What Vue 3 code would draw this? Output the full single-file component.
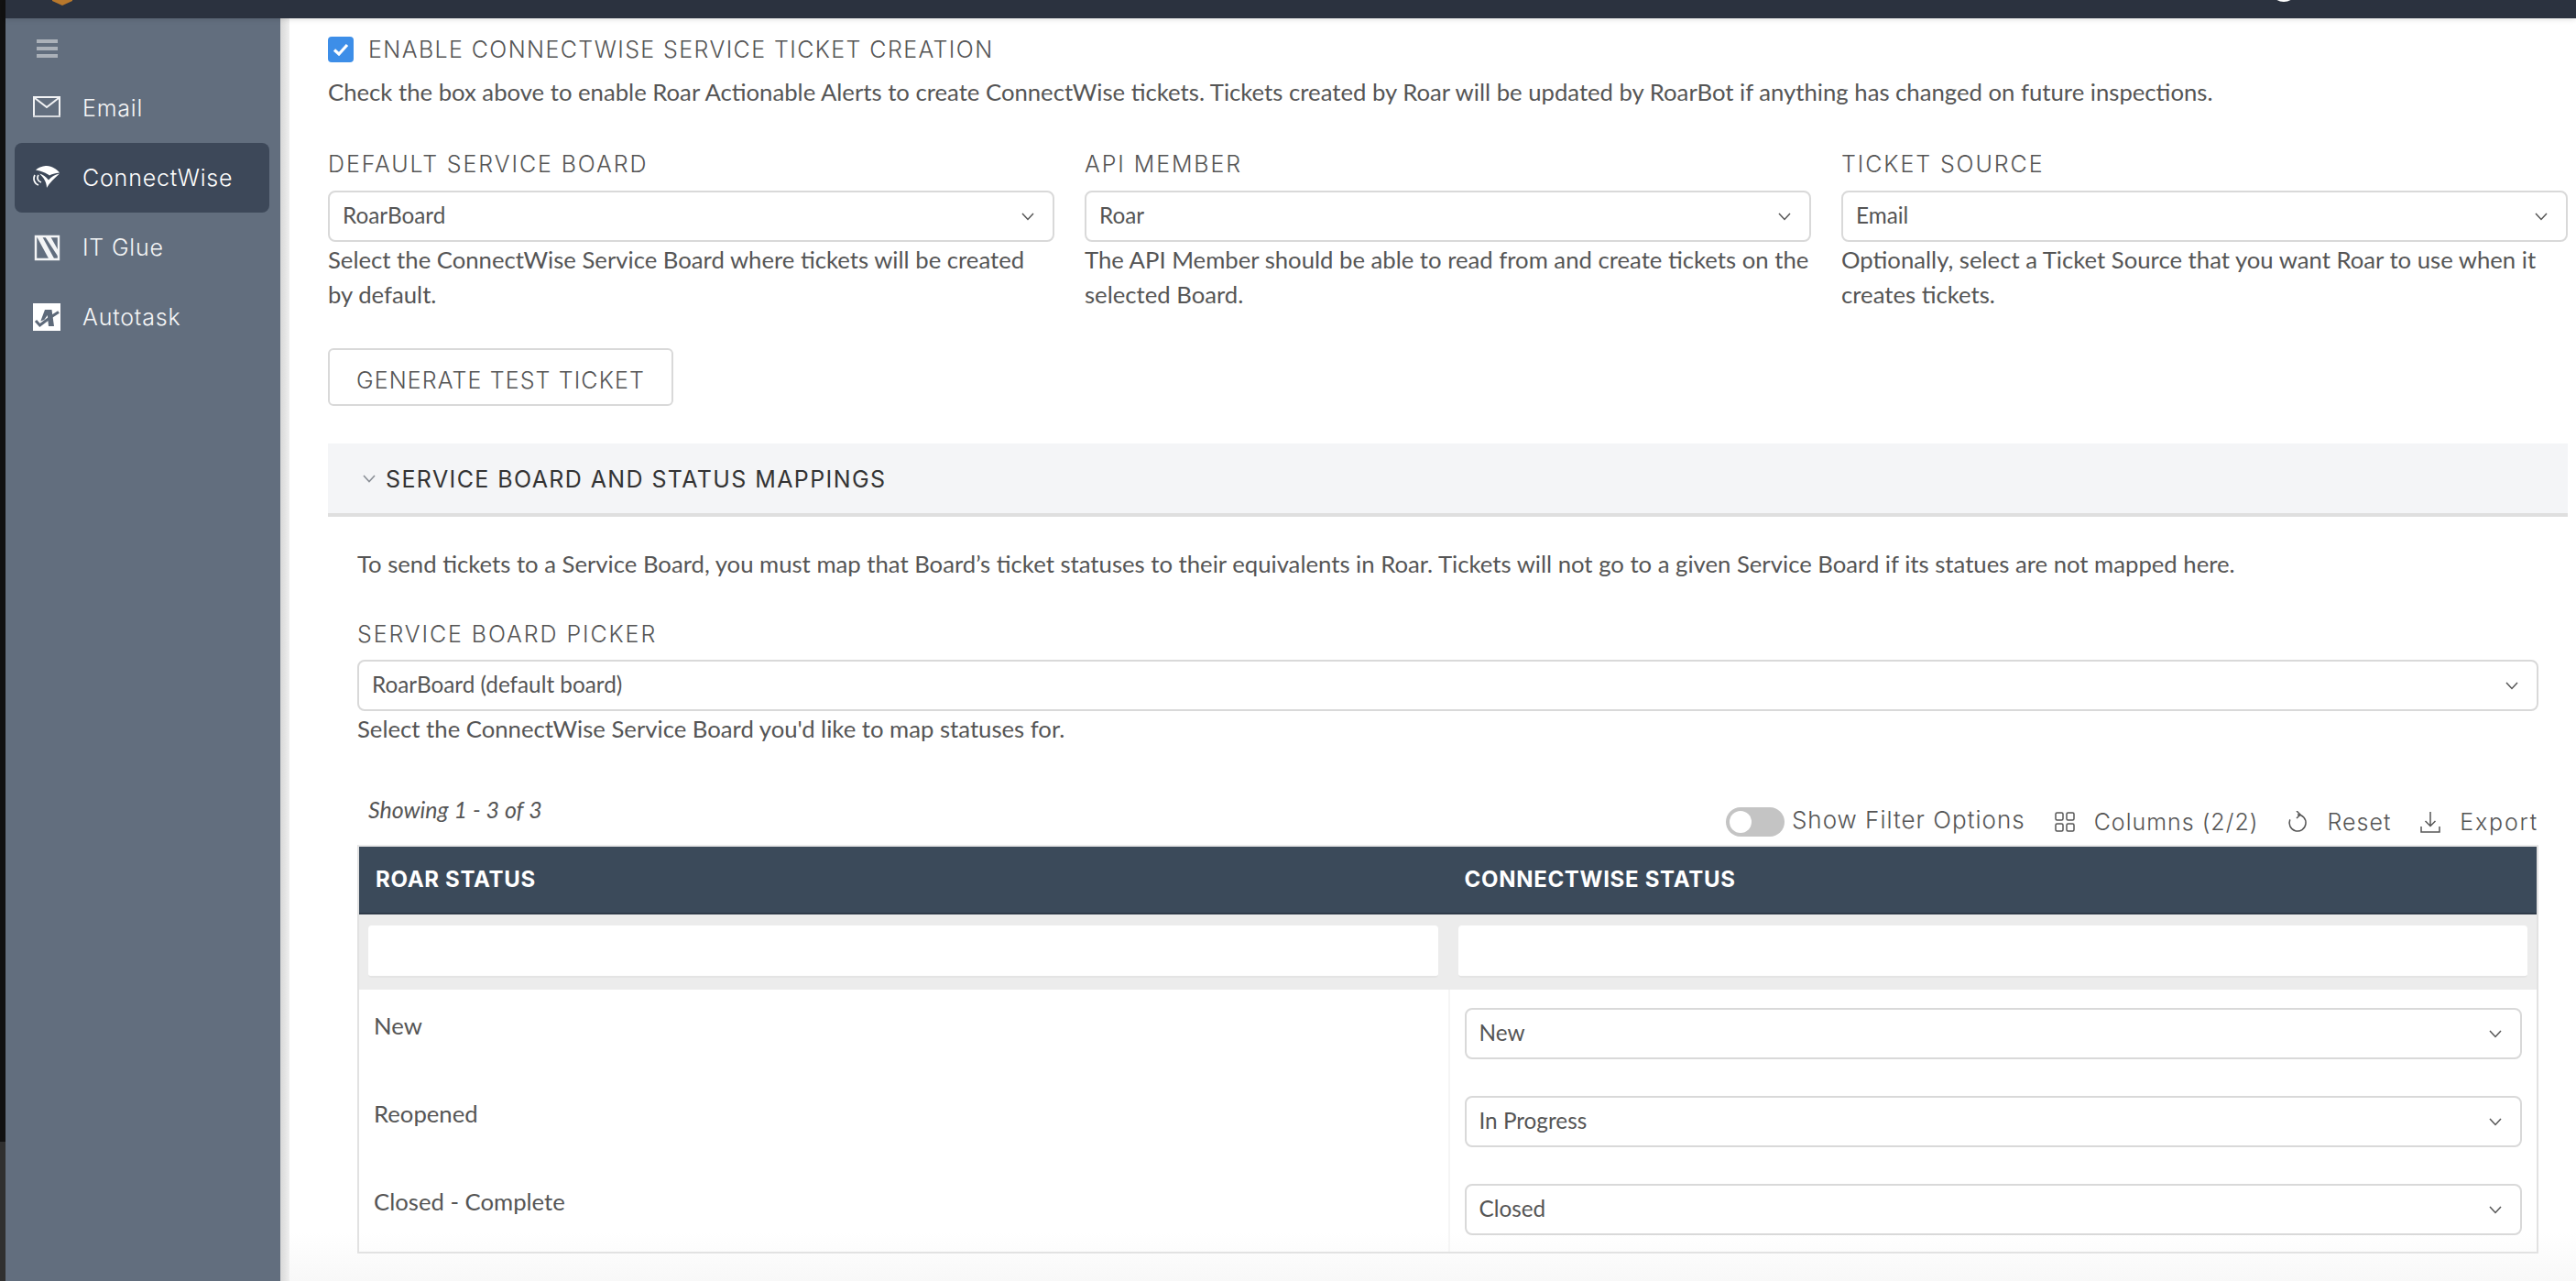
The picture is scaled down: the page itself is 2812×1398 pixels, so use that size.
<script setup>
const columns = [
  { label: 'DEFAULT SERVICE BOARD', value: 'RoarBoard', help: 'Select the ConnectWise Service Board where tickets will be created by default.' },
  { label: 'API MEMBER', value: 'Roar', help: 'The API Member should be able to read from and create tickets on the selected Board.' },
  { label: 'TICKET SOURCE', value: 'Email', help: 'Optionally, select a Ticket Source that you want Roar to use when it creates tickets.' }
]
const rows = [
  { roar: 'New', cw: 'New' },
  { roar: 'Reopened', cw: 'In Progress' },
  { roar: 'Closed - Complete', cw: 'Closed' }
]
</script>

<template>
  <div class="frame">
    <div class="strip"></div>
    <div class="shell">
      <header class="topbar">
        <svg class="logo" width="22" height="6" viewBox="0 0 22 6"><path d="M0 0h22v1l-11 5L0 1z" fill="#b8782c" /></svg>
        <div class="avatar"></div>
      </header>
      <div class="body">
        <aside class="sidebar">
          <div class="burger"><i></i><i></i><i></i></div>
          <nav class="nav">
            <a class="nav-item">
              <svg class="nav-icon" width="30" height="30" viewBox="0 0 30 30">
                <path d="M1 3h28v21H1z" fill="none" stroke="#f2f3f5" stroke-width="2" />
                <path d="M2 4l13 10L28 4" fill="none" stroke="#f2f3f5" stroke-width="2" />
                <path d="M0 23h30v2H0z" fill="#d5d8dc" />
              </svg>
              <span>Email</span>
            </a>
            <a class="nav-item active">
              <svg class="nav-icon" width="30" height="30" viewBox="6 8 30 30">
                <path d="M9 14.500c4-3.500 9-4.500 12-4.500 6 .5 11 3.500 14 7.500-5 .5-9 1.500-11 3-3-2.500-9-5-15-6z" fill="#fff" />
                <path d="M13 18.500c4 1 7 3.500 10 7 3-3.500 7-6 12-7-6 5.500-11 10-14 15.500 0-6-3-11-8-15.500z" fill="#fff" />
                <path d="M8 20c-2 4-1 9 4 11M12 20c-2 3-1 7 3 8" fill="none" stroke="#fff" stroke-width="1.700" />
              </svg>
              <span>ConnectWise</span>
            </a>
            <a class="nav-item">
              <svg class="nav-icon" width="30" height="30" viewBox="6 4 30 30">
                <path d="M9 7h25v25H9z" fill="none" stroke="#f4f5f6" stroke-width="2.400" />
                <path d="M10 7h6l13 24h-6zM19 7h6l9 16v7z" fill="#f4f5f6" />
              </svg>
              <span>IT Glue</span>
            </a>
            <a class="nav-item">
              <svg class="nav-icon" width="30" height="30" viewBox="6 5 30 30">
                <path d="M6 5h30v30H6z" fill="#fff" />
                <path d="M9 24l4.500 5L24 21l10-6.500" fill="none" stroke="#5e6a7a" stroke-width="3" />
                <path d="M19 12h7.500l2.500 18h-6l-1.200-12-3.500 5-4 1.500z" fill="#5e6a7a" />
              </svg>
              <span>Autotask</span>
            </a>
          </nav>
        </aside>
        <div class="gutter"></div>
        <main class="content">
          <label class="enable">
            <span class="check">
              <svg width="18" height="14" viewBox="0 0 18 14"><path d="M2 7.500l5 4.500 9-10" fill="none" stroke="#fff" stroke-width="3.200" /></svg>
            </span>
            <span class="caps enable-text">ENABLE CONNECTWISE SERVICE TICKET CREATION</span>
          </label>
          <p class="intro">Check the box above to enable Roar Actionable Alerts to create ConnectWise tickets. Tickets created by Roar will be updated by RoarBot if anything has changed on future inspections.</p>

          <div class="triple">
            <div v-for="c in columns" :key="c.label" class="field">
              <div class="caps label">{{ c.label }}</div>
              <div class="select">
                <span>{{ c.value }}</span>
                <svg width="14" height="9" viewBox="0 0 14 9"><path d="M1 1l6 6.500L13 1" fill="none" stroke="#555" stroke-width="1.500" /></svg>
              </div>
              <p class="help">{{ c.help }}</p>
            </div>
          </div>

          <button class="btn caps" type="button">GENERATE TEST TICKET</button>

          <section class="accordion">
            <div class="acc-head">
              <svg width="14" height="9" viewBox="0 0 14 9"><path d="M1 1l6 6.500L13 1" fill="none" stroke="#8a8f96" stroke-width="1.600" /></svg>
              <span class="caps acc-title">SERVICE BOARD AND STATUS MAPPINGS</span>
            </div>
            <div class="acc-body">
              <p class="lead">To send tickets to a Service Board, you must map that Board’s ticket statuses to their equivalents in Roar. Tickets will not go to a given Service Board if its statues are not mapped here.</p>
              <div class="caps label picker-label">SERVICE BOARD PICKER</div>
              <div class="select">
                <span>RoarBoard (default board)</span>
                <svg width="14" height="9" viewBox="0 0 14 9"><path d="M1 1l6 6.500L13 1" fill="none" stroke="#555" stroke-width="1.500" /></svg>
              </div>
              <p class="help">Select the ConnectWise Service Board you'd like to map statuses for.</p>

              <div class="toolbar">
                <em class="showing">Showing 1 - 3 of 3</em>
                <div class="tools">
                  <span class="toggle"><i></i></span>
                  <span class="caps tool tool-filter">Show Filter Options</span>
                  <svg class="tool-icon" width="22" height="22" viewBox="0 0 22 22" fill="none" stroke="#555" stroke-width="1.500">
                    <rect x="1" y="1" width="8" height="8" rx="1.500" /><rect x="13" y="1" width="8" height="8" rx="1.500" />
                    <rect x="1" y="13" width="8" height="8" rx="1.500" /><rect x="13" y="13" width="8" height="8" rx="1.500" />
                  </svg>
                  <span class="caps tool">Columns (2/2)</span>
                  <svg class="tool-icon" width="22" height="24" viewBox="0 0 22 24" fill="none" stroke="#555" stroke-width="1.500">
                    <path d="M11 4a9 9 0 1 1-8.200 5.400" /><path d="M10 0l4 4-4 4" />
                  </svg>
                  <span class="caps tool">Reset</span>
                  <svg class="tool-icon" width="22" height="24" viewBox="0 0 22 24" fill="none" stroke="#555" stroke-width="1.500">
                    <path d="M11 1v15M5.500 11l5.500 5.500 5.500-5.500M1 17v6h20v-6" />
                  </svg>
                  <span class="caps tool tool-export">Export</span>
                </div>
              </div>

              <div class="table">
                <div class="thead">
                  <div class="th">ROAR STATUS</div>
                  <div class="th">CONNECTWISE STATUS</div>
                </div>
                <div class="tfilter">
                  <div class="tf"><input type="text" /></div>
                  <div class="tf"><input type="text" /></div>
                </div>
                <div v-for="r in rows" :key="r.roar" class="tr">
                  <div class="td">{{ r.roar }}</div>
                  <div class="td td-select">
                    <div class="select">
                      <span>{{ r.cw }}</span>
                      <svg width="14" height="9" viewBox="0 0 14 9"><path d="M1 1l6 6.500L13 1" fill="none" stroke="#555" stroke-width="1.500" /></svg>
                    </div>
                  </div>
                </div>
              </div>
            </div>
          </section>
        </main>
      </div>
    </div>
  </div>
</template>

<style>
html, body { margin: 0; background: #fff; overflow: hidden; }
</style>

<style scoped>
.frame { display: flex; width: 2812px; height: 1398px; overflow: hidden; font-family: Lato, sans-serif; color: #555; font-size: 25.7px; }
.strip { width: 6px; flex: none; background: linear-gradient(#111 0, #111 1246px, #303030 1246px); }
.shell { flex: 1; display: flex; flex-direction: column; min-width: 0; }
.topbar { height: 20px; flex: none; background: #2b323f; position: relative; box-shadow: 0 2px 5px rgba(0,0,0,.1); z-index: 2; }
.logo { position: absolute; left: 51px; top: 0; }
.avatar { position: absolute; left: 2472px; top: -28px; width: 30px; height: 30px; border-radius: 50%; background: #fff; }
.body { flex: 1; display: flex; min-height: 0; }
.sidebar { width: 300px; flex: none; background: #626e7e; display: flex; flex-direction: column; }
.burger { height: 60px; padding: 23px 0 0 34px; box-sizing: border-box; }
.burger i { display: block; width: 23px; height: 4px; margin-bottom: 4px; background: #abb1b9; }
.nav { display: flex; flex-direction: column; padding: 0 12px 0 10px; }
.nav-item { height: 76px; display: flex; align-items: center; gap: 24px; padding-left: 20px; border-radius: 8px; color: #f4f5f6; font-family: Inter, sans-serif; font-weight: 300; font-size: 25px; letter-spacing: .8px; box-sizing: border-box; }
.nav-item.active { background: #3d4859; color: #fff; }
.nav-icon { flex: none; }
.gutter { width: 10px; flex: none; background: linear-gradient(90deg, #d8d8d8, #efefef); }
.content { flex: 1; min-width: 0; padding: 20px 9px 0 42px; background: linear-gradient(#fff 0, #fff 1325px, #f8f8f8 1378px); }
.caps { font-family: Inter, sans-serif; font-weight: 300; }
.enable { display: flex; align-items: center; gap: 16px; height: 28px; }
.check { width: 28px; height: 28px; border-radius: 4px; background: #3d8ee8; display: flex; align-items: center; justify-content: center; }
.enable-text { font-size: 25px; color: #555; letter-spacing: 1.4px; }
.intro { margin: 13px 0 0; line-height: 38px; }
.triple { display: grid; grid-template-columns: repeat(3, 793px); gap: 33px; margin-top: 40px; }
.label { font-size: 25px; height: 38px; line-height: 40px; color: #555; letter-spacing: 1.9px; }
.select { height: 56px; box-sizing: border-box; border: 2px solid #d9d9d9; border-radius: 8px; background: #fff; display: flex; align-items: center; justify-content: space-between; padding: 0 20px 3px 14px; font-size: 24.3px; color: #555; }
.select svg { margin-top: 3px; }
.field .select { margin-top: 11px; }
.help { margin: 0; line-height: 38px; }
.btn { display: block; margin: 40px 0 0; width: 377px; height: 63px; border: 2px solid #d9d9d9; border-radius: 6px; background: #fff; color: #555; font-size: 25px; letter-spacing: 1.1px; padding: 6px 0 0; }
.accordion { margin-top: 41px; }
.acc-head { height: 80px; box-sizing: border-box; border-bottom: 4px solid #dfdfdf; background: #f4f5f7; display: flex; align-items: center; gap: 11px; padding-left: 38px; }
.acc-title { font-size: 25px; font-weight: 400; color: #333; letter-spacing: 1.4px; padding-top: 2px; }
.acc-body { padding: 32px 32px 0; }
.lead { margin: 0; line-height: 38px; }
.picker-label { margin-top: 38px; }
.acc-body > .select { margin-top: 10px; }
.toolbar { height: 108px; display: flex; justify-content: space-between; align-items: flex-start; box-sizing: border-box; padding-top: 50px; }
.showing { padding-left: 12px; line-height: 38px; font-size: 25px; }
.tools { display: flex; align-items: center; margin-top: 15px; }
.toggle { width: 64px; height: 32px; border-radius: 16px; background: #c4c4c4; display: flex; align-items: center; padding-left: 4px; box-sizing: border-box; }
.toggle i { width: 24px; height: 24px; background: #fff; border-radius: 50%; }
.tool { font-size: 25px; color: #555; margin-left: 21px; letter-spacing: 1px; white-space: nowrap; }
.tool-filter { margin-left: 8px; margin-bottom: 4px; font-size: 26px; letter-spacing: 1px; }
.tool-export { letter-spacing: 1.8px; }
.tool-icon { margin-left: 32px; flex: none; }
.table { border: 2px solid #e2e2e2; border-top-color: #ebebeb; box-sizing: border-box; }
.thead, .tfilter, .tr { display: grid; grid-template-columns: 1fr 1fr; }
.thead { height: 74px; background: #3b4a5a; border-bottom: 2px solid #2f3b49; box-sizing: border-box; }
.th { padding-left: 18px; line-height: 72px; color: #fff; font-family: Inter, sans-serif; font-weight: 700; font-size: 24px; letter-spacing: .7px; }
.tfilter { height: 82px; background: #ececec; padding-top: 12px; box-sizing: border-box; }
.tf { padding: 0 11px 0 10px; }
.tf + .tf { padding: 0 10px 0 11px; }
.tf input { display: block; width: 100%; height: 57px; box-sizing: border-box; border: 0; border-bottom: 2px solid #e4e4e4; border-radius: 4px; background: #fff; }
.tr { height: 96px; }
.tr:last-child { height: 94px; }
.td { padding: 20px 16px 0; line-height: 38px; }
.td-select { border-left: 2px solid #f5f5f5; }
</style>
